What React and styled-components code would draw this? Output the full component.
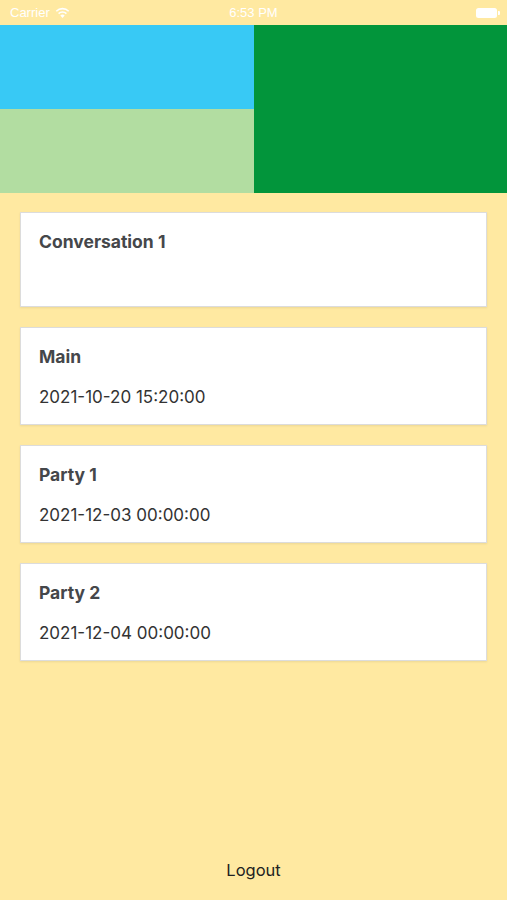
import React from "react";
import styled, { createGlobalStyle } from "styled-components";

const Global = createGlobalStyle`
  html, body { margin: 0; padding: 0; background: #FFE9A1; }
  body { font-family: Inter, "Liberation Sans", Arial, sans-serif; }
`;

const Page = styled.div`
  width: 507px;
  height: 900px;
  display: flex;
  flex-direction: column;
  background: #FFE9A1;
  overflow: hidden;
`;

const StatusBar = styled.div`
  height: 25px;
  display: grid;
  grid-template-columns: 1fr auto 1fr;
  align-items: center;
  padding: 0 10px;
  color: #ffffff;
  font-family: "Liberation Sans", Arial, sans-serif;
  font-size: 13px;
`;

const Left = styled.div`
  display: flex;
  align-items: center;
  gap: 5px;
`;

const Right = styled.div`
  display: flex;
  justify-content: flex-end;
  align-items: center;
`;

const Battery = styled.div`
  width: 21px;
  height: 10px;
  border-radius: 2.5px;
  background: #fff;
  position: relative;
  &::after {
    content: "";
    position: absolute;
    right: -3px;
    top: 3px;
    width: 2px;
    height: 4px;
    border-radius: 0 1px 1px 0;
    background: #fff;
  }
`;

const Header = styled.div`
  display: grid;
  grid-template-columns: 254px 1fr;
  grid-template-rows: 84px 84px;
`;

const Tile = styled.div`
  background: ${(p) => p.$color};
  grid-row: ${(p) => (p.$span ? "1 / span 2" : "auto")};
  grid-column: ${(p) => p.$col || "auto"};
`;

const List = styled.div`
  display: flex;
  flex-direction: column;
  gap: 20px;
  padding: 19px 20px 0 20px;
`;

const Card = styled.div`
  background: #fff;
  border: 1px solid #dcdcdc;
  box-shadow: 0 1px 2px rgba(0, 0, 0, 0.08);
  padding: 16px 19px 14px 18px;
  display: flex;
  flex-direction: column;
  gap: 14px;
`;

const Title = styled.div`
  font-size: 17.5px;
  font-weight: 700;
  line-height: 26px;
  color: #45474a;
`;

const DateText = styled.div`
  font-size: 17px;
  line-height: 26px;
  min-height: 23px;
  color: #333;
`;

const Footer = styled.div`
  margin-top: auto;
  height: 60px;
  display: flex;
  justify-content: center;
  align-items: center;
`;

const LogoutBtn = styled.button`
  border: none;
  background: none;
  font-family: Inter, "Liberation Sans", Arial, sans-serif;
  font-size: 16.5px;
  color: #222;
  padding: 0;
  cursor: pointer;
`;

const items = [
  { title: "Conversation 1", date: "" },
  { title: "Main", date: "2021-10-20 15:20:00" },
  { title: "Party 1", date: "2021-12-03 00:00:00" },
  { title: "Party 2", date: "2021-12-04 00:00:00" },
];

export default function App() {
  return (
    <Page>
      <Global />
      <StatusBar>
        <Left>
          <span>Carrier</span>
          <svg width="15" height="11" viewBox="0 0 15 11">
            <path d="M7.5 11 L5.3 8.4 A3.3 3.3 0 0 1 9.7 8.4 Z" fill="#fff" />
            <path d="M3.6 6.6 A5.6 5.6 0 0 1 11.4 6.6" stroke="#fff" strokeWidth="1.6" fill="none" />
            <path d="M1.3 4.2 A8.8 8.8 0 0 1 13.7 4.2" stroke="#fff" strokeWidth="1.6" fill="none" />
          </svg>
        </Left>
        <span>6:53 PM</span>
        <Right>
          <Battery />
        </Right>
      </StatusBar>
      <Header>
        <Tile $color="#38C9F5" />
        <Tile $color="#02953B" $span $col="2" />
        <Tile $color="#B2DDA1" />
      </Header>
      <List>
        {items.map((it) => (
          <Card key={it.title}>
            <Title>{it.title}</Title>
            <DateText>{it.date}</DateText>
          </Card>
        ))}
      </List>
      <Footer>
        <LogoutBtn>Logout</LogoutBtn>
      </Footer>
    </Page>
  );
}
